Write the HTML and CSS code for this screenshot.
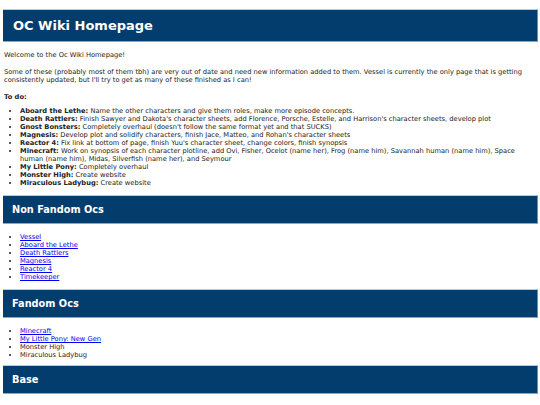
FILE: index.html
```html
<!DOCTYPE html>
<html>
<head>
<meta charset="utf-8">
<title>OC Wiki Homepage</title>
<link rel="stylesheet" href="styles.css">
</head>
<body>
<div class="page">
  <h1 class="bar bar-main">OC Wiki Homepage</h1>
  <p class="text">Welcome to the Oc Wiki Homepage!</p>
  <p class="text">Some of these (probably most of them tbh) are very out of date and need new information added to them. Vessel is currently the only page that is getting consistently updated, but I'll try to get as many of these finished as I can!</p>
  <p class="text"><b>To do:</b></p>
  <ul class="list">
    <li><b>Aboard the Lethe:</b> Name the other characters and give them roles, make more episode concepts.</li>
    <li><b>Death Rattlers:</b> Finish Sawyer and Dakota's character sheets, add Florence, Porsche, Estelle, and Harrison's character sheets, develop plot</li>
    <li><b>Gnost Bonsters:</b> Completely overhaul (doesn't follow the same format yet and that SUCKS)</li>
    <li><b>Magnesis:</b> Develop plot and solidify characters, finish Jace, Matteo, and Rohan's character sheets</li>
    <li><b>Reactor 4:</b> Fix link at bottom of page, finish Yuu's character sheet, change colors, finish synopsis</li>
    <li><b>Minecraft:</b> Work on synopsis of each character plotline, add Ovi, Fisher, Ocelot (name her), Frog (name him), Savannah human (name him), Space human (name him), Midas, Silverfish (name her), and Seymour</li>
    <li><b>My Little Pony:</b> Completely overhaul</li>
    <li><b>Monster High:</b> Create website</li>
    <li><b>Miraculous Ladybug:</b> Create website</li>
  </ul>
  <h2 class="bar bar-sub">Non Fandom Ocs</h2>
  <ul class="list">
    <li><a href="#">Vessel</a></li>
    <li><a href="#">Aboard the Lethe</a></li>
    <li><a href="#">Death Rattlers</a></li>
    <li><a href="#">Magnesis</a></li>
    <li><a href="#">Reactor 4</a></li>
    <li><a href="#">Timekeeper</a></li>
  </ul>
  <h2 class="bar bar-sub">Fandom Ocs</h2>
  <ul class="list">
    <li><a href="#">Minecraft</a></li>
    <li><a href="#">My Little Pony: New Gen</a></li>
    <li>Monster High</li>
    <li>Miraculous Ladybug</li>
  </ul>
  <h2 class="bar bar-sub bar-last">Base</h2>
</div>
</body>
</html>
```
FILE: styles.css
```css
html, body {
  margin: 0;
  padding: 0;
  background: #ffffff;
}
body {
  font-family: "DejaVu Sans", Verdana, sans-serif;
  font-size: 6.7px;
  line-height: 8px;
  color: #222222;
}
.page {
  padding: 9px 2px 0 3px;
}
.bar {
  margin: 0;
  background: #023d6e;
  color: #ffffff;
  font-weight: bold;
  border-top: 1px solid #a9cfe6;
  border-right: 1px solid #6f8fae;
  border-bottom: 1px solid #8ea7bf;
  box-sizing: border-box;
}
.bar-main {
  height: 33px;
  font-size: 13px;
  line-height: 31px;
  padding: 0 10px;
}
.bar-sub {
  height: 29px;
  font-size: 9.75px;
  line-height: 27px;
  padding: 0 9px;
  margin-top: 8px;
}
.bar-last {
  margin-top: 6px;
}
.text {
  margin: 9px 0 0 1px;
}
.list {
  margin: 6px 0 0 1px;
  padding-left: 16px;
}
.bar + .list {
  margin-top: 9px;
}
.list li {
  line-height: 8px;
}
a {
  color: #0000ee;
}
```
